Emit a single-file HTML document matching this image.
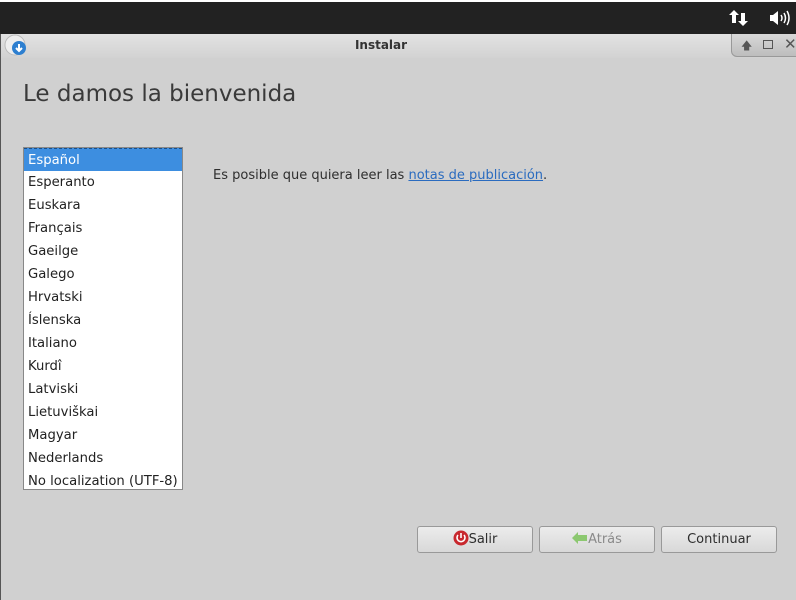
<!DOCTYPE html>
<html><head><meta charset="utf-8"><style>
*{margin:0;padding:0;box-sizing:border-box}
body{width:796px;height:600px;background:#d0d0d0;font-family:"DejaVu Sans","Liberation Sans",sans-serif;position:relative;overflow:hidden;color:#2e2e2e}
#top{position:absolute;left:0;top:0;width:796px;height:34px;background:#222;border-top:2px solid #fff}
#tb{position:absolute;left:0;top:34px;width:796px;height:24px;background:linear-gradient(#e2e2e2,#d2d2d2)}
#lb{position:absolute;left:0;top:34px;width:1px;height:566px;background:#555}
.title{position:absolute;left:0;width:762px;top:38px;text-align:center;font-size:12px;font-weight:bold;color:#333}
#wc{position:absolute;left:731px;top:34px;width:70px;height:23px;background:linear-gradient(#d8d8d8,#bdbdbd);border:1px solid #999;border-top:none;border-radius:0 0 0 6px}
h1{position:absolute;left:23px;top:81px;font-size:23px;font-weight:normal;color:#3a3a3a}
#list{position:absolute;left:23px;top:147px;width:160px;height:343px;background:#fff;border:1px solid #888}
#list div{height:23px;line-height:24px;padding-left:4px;font-size:13.2px;color:#222;white-space:nowrap}
#list div.sel{background:#3d8ee0;color:#fff;border-top:1px dashed #1a4f8a}
.p{position:absolute;left:213px;top:168px;font-size:13px;color:#2e2e2e}
.p a{color:#2a6bbf;text-decoration:underline}
.btn{position:absolute;top:526px;width:116px;height:27px;border:1px solid #999;border-radius:3px;background:linear-gradient(#ececec,#d8d8d8);font-size:13px;text-align:center;line-height:25px;color:#2e2e2e}
</style></head><body>
<div id="top"></div>
<svg style="position:absolute;left:729px;top:9px" width="20" height="18"><path d="M5 1 L10 6 H7 V14 H3 V6 H0 Z" fill="#fff"/><path d="M14 17 L19 12 H16 V4 H12 V12 H9 Z" fill="#fff"/></svg>
<svg style="position:absolute;left:769px;top:10px" width="22" height="16"><path d="M1 5 H4 L9 1 V15 L4 11 H1 Z" fill="#fff"/><path d="M12 5 Q14 8 12 11 M15 3 Q18 8 15 13 M18 1 Q22 8 18 15" stroke="#fff" stroke-width="1.5" fill="none"/></svg>
<div id="tb"></div>
<div id="lb"></div>
<svg style="position:absolute;left:4px;top:34px" width="24" height="24"><circle cx="11" cy="11" r="10" fill="#eee" stroke="#bbb"/><circle cx="15" cy="14" r="7" fill="#2d7fd0"/><path d="M15 10 V17 M12 14 L15 17 L18 14" stroke="#fff" stroke-width="2" fill="none"/></svg>
<div class="title">Instalar</div>
<div id="wc"><span style="position:absolute;left:9px;top:3px;font-size:11px;color:#555">🡅</span><span style="position:absolute;left:31px;top:6px;width:10px;height:9px;border:1px solid #555"></span><span style="position:absolute;left:52px;top:1px;font-size:15px;color:#555">✕</span></div>
<h1>Le damos la bienvenida</h1>
<div id="list">
<div class="sel">Español</div><div>Esperanto</div><div>Euskara</div><div>Français</div><div>Gaeilge</div><div>Galego</div><div>Hrvatski</div><div>Íslenska</div><div>Italiano</div><div>Kurdî</div><div>Latviski</div><div>Lietuviškai</div><div>Magyar</div><div>Nederlands</div><div>No localization (UTF-8)</div>
</div>
<div class="p">Es posible que quiera leer las <a>notas de publicación</a>.</div>
<div class="btn" style="left:417px"><svg width="16" height="16" style="vertical-align:-3px"><circle cx="8" cy="8" r="7.5" fill="#c8282e"/><path d="M5 5 A4 4 0 1 0 11 5 M8 3 V8" stroke="#fff" stroke-width="1.6" fill="none"/></svg>Salir</div>
<div class="btn" style="left:539px;color:#8a8a8a"><svg width="16" height="12" style="vertical-align:-1px"><path d="M0 6 L6 0 V3 H15 V9 H6 V12 Z" fill="#8cc870"/></svg>Atrás</div>
<div class="btn" style="left:661px">Continuar</div>
</body></html>
